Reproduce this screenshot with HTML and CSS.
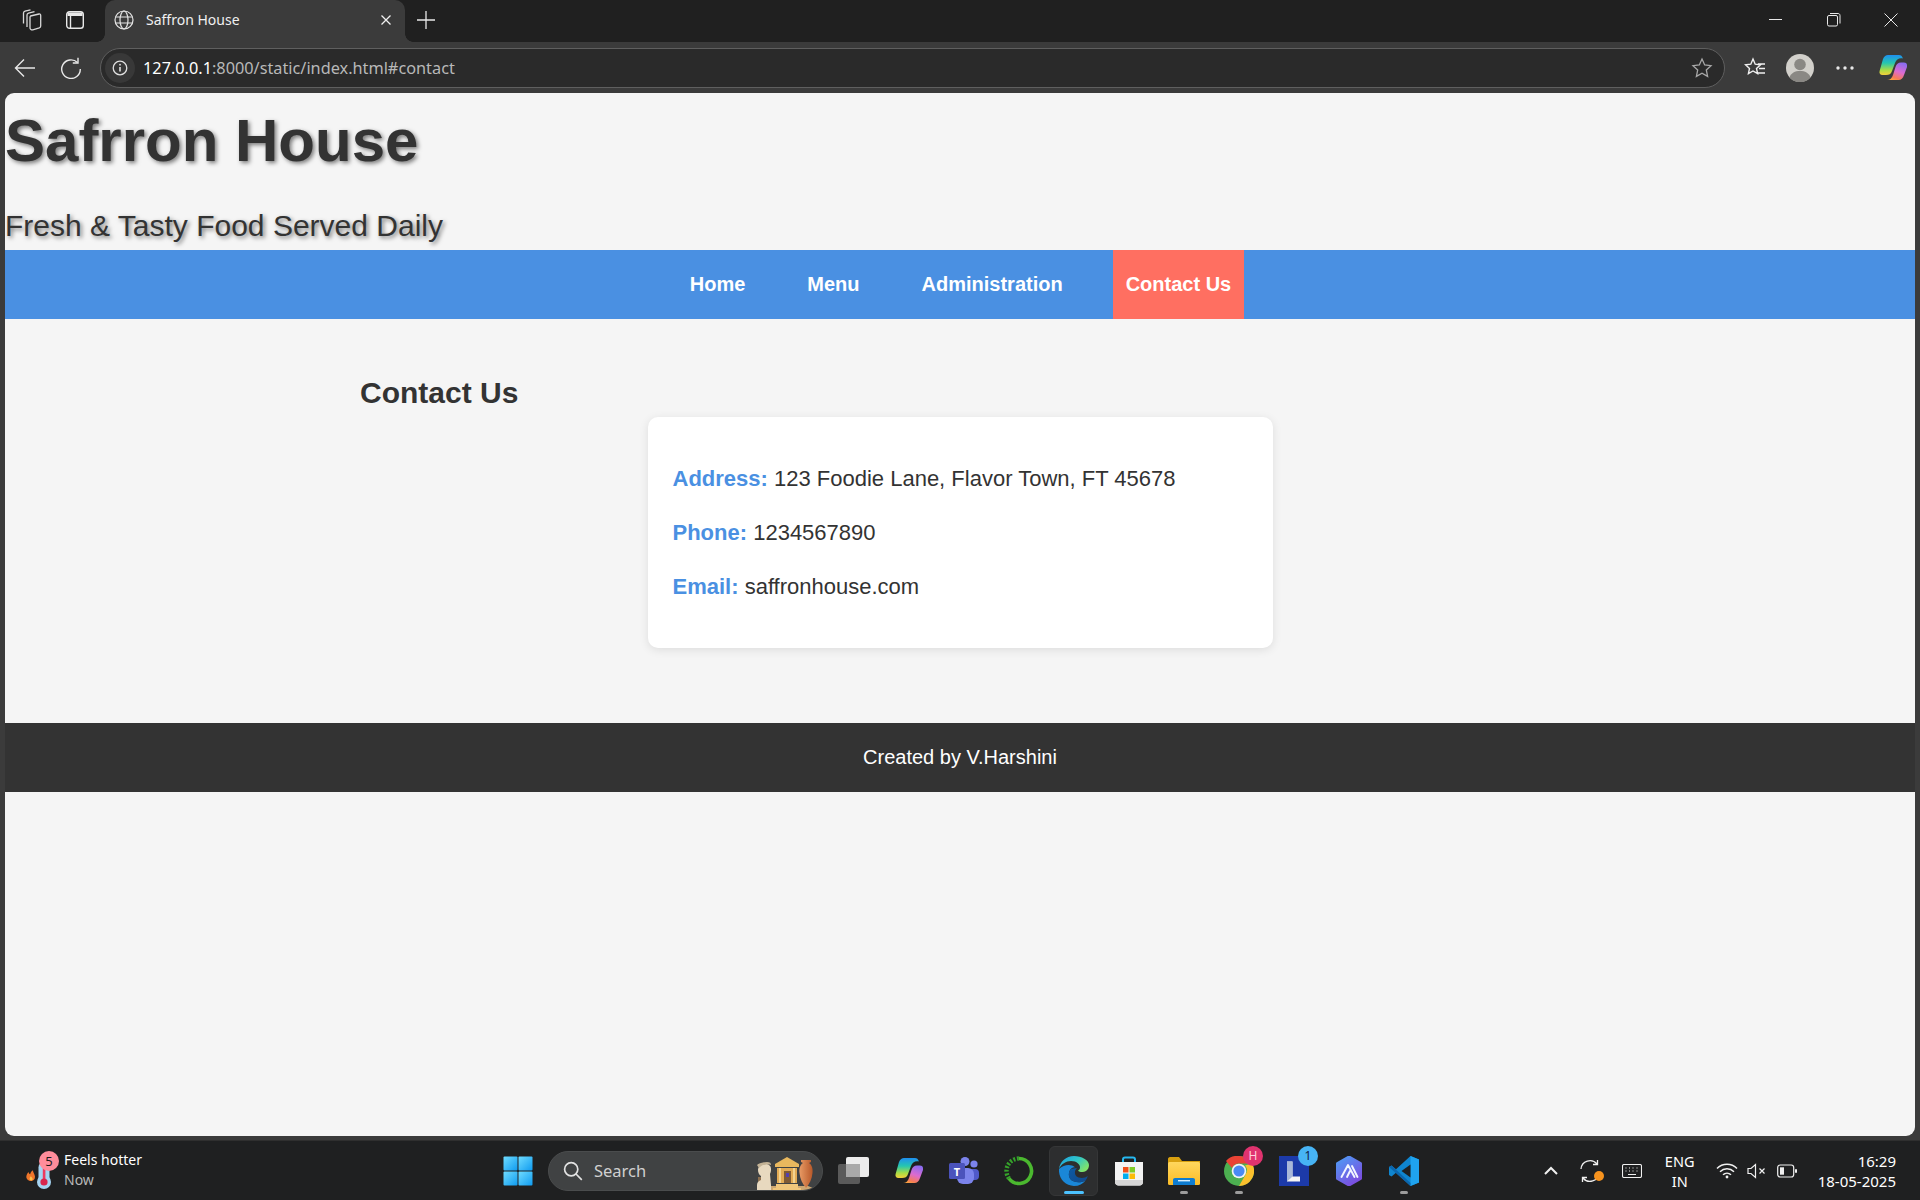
FILE: index.html
```html
<!DOCTYPE html>
<html lang="en">
<head>
<meta charset="utf-8">
<title>Saffron House</title>
<link rel="stylesheet" href="styles.css">
</head>
<body>
<svg class="defs" width="0" height="0" aria-hidden="true">
  <defs>
    <linearGradient id="copA" x1="0.3" y1="0" x2="0.3" y2="1"><stop offset="0" stop-color="#1f8ff0"/><stop offset=".4" stop-color="#25c6b0"/><stop offset=".75" stop-color="#a9dc45"/><stop offset="1" stop-color="#f4cf3a"/></linearGradient>
    <linearGradient id="copB" x1="0.7" y1="0" x2="0.3" y2="1"><stop offset="0" stop-color="#8a6cf0"/><stop offset=".5" stop-color="#dc6bd0"/><stop offset=".85" stop-color="#f57a5a"/><stop offset="1" stop-color="#f9a03f"/></linearGradient>
    <linearGradient id="edgeA" x1="0" y1="0" x2="1" y2="0.6"><stop offset="0" stop-color="#1b9de2"/><stop offset=".55" stop-color="#30c6c8"/><stop offset="1" stop-color="#7fe36c"/></linearGradient>
    <linearGradient id="edgeB" x1="0" y1="0" x2="1" y2="1"><stop offset="0" stop-color="#0c59a4"/><stop offset="1" stop-color="#114a8b"/></linearGradient>
    <linearGradient id="winG" x1="0" y1="0" x2="1" y2="1"><stop offset="0" stop-color="#6fdcff"/><stop offset="1" stop-color="#0f9bf0"/></linearGradient>
    <linearGradient id="folderG" x1="0" y1="0" x2="0" y2="1"><stop offset="0" stop-color="#ffd75e"/><stop offset="1" stop-color="#fcbc26"/></linearGradient>
    <linearGradient id="atomG" x1="0" y1="0" x2="0.6" y2="1"><stop offset="0" stop-color="#4d9df5"/><stop offset="1" stop-color="#7a4fe0"/></linearGradient>
    <linearGradient id="vaseG" x1="0" y1="0" x2="1" y2="0"><stop offset="0" stop-color="#e89a64"/><stop offset="1" stop-color="#b8592a"/></linearGradient>
  </defs>
</svg>

<div class="tabstrip">
  <span class="strip-icon strip-workspace">
    <svg width="24" height="24" viewBox="0 0 24 24" fill="none" stroke="#d8d8d8" stroke-width="1.300"><path d="M11.500 8 20 6c1-.2 1.700.4 1.700 1.400V18c0 1-.5 1.500-1.400 1.800l-6.500 2c-1.500.3-2.800-.7-2.800-1.800V9.200c0-.6.100-1 .5-1.200z"/><path d="M8 19V7c0-1 .5-1.500 1.500-1.800L15.500 3.600"/><path d="M4.500 15.500V5c0-1 .5-1.500 1.500-1.800L11.500 1.800"/></svg>
  </span>
  <span class="strip-icon strip-vertical">
    <svg width="20" height="20" viewBox="0 0 20 20" fill="none" stroke="#e8e8e8" stroke-width="1.400"><rect x="1.700" y="1.700" width="16.600" height="16.600" rx="2.800"/><path d="M2.500 2.500h15v3.500h-15z" fill="#e8e8e8" stroke="none"/><path d="M5.500 6v12"/></svg>
  </span>
  <div class="tab">
    <svg class="tab-globe" width="20" height="20" viewBox="0 0 20 20" fill="none" stroke="#e4e4e4" stroke-width="1.200"><circle cx="10" cy="10" r="9"/><ellipse cx="10" cy="10" rx="4" ry="9"/><path d="M1.500 7h17M1.500 13h17"/></svg>
    <span class="tab-title">Saffron House</span>
    <svg class="tab-close" width="12" height="12" viewBox="0 0 12 12" stroke="#f0f0f0" stroke-width="1.300"><path d="M1.500 1.500l9 9M10.500 1.500l-9 9"/></svg>
  </div>
  <svg class="tab-new" width="18" height="18" viewBox="0 0 18 18" stroke="#e8e8e8" stroke-width="1.300"><path d="M9 0v18M0 9h18"/></svg>
  <div class="win-controls">
    <svg width="14" height="14" viewBox="0 0 14 14" stroke="#e8e8e8" stroke-width="1"><path d="M0 6.500h13"/></svg>
    <svg width="14" height="14" viewBox="0 0 14 14" fill="none" stroke="#e8e8e8" stroke-width="1"><rect x=".5" y="2.500" width="10" height="10.500" rx="1.500"/><path d="M3 .5h8c1.200 0 2 .8 2 2v8"/></svg>
    <svg width="14" height="14" viewBox="0 0 14 14" stroke="#e8e8e8" stroke-width="1"><path d="M.5.500l13 13M13.500.5l-13 13"/></svg>
  </div>
</div>

<div class="toolbar">
  <svg class="tool-back" width="22" height="20" viewBox="0 0 22 20" fill="none" stroke="#e8e8e8" stroke-width="1.400"><path d="M21 10H1.500M10 1.500 1.500 10l8.500 8.500"/></svg>
  <svg class="tool-reload" width="22" height="22" viewBox="0 0 22 22" fill="none" stroke="#e8e8e8" stroke-width="1.400"><path d="M17.500 5.500A9.300 9.300 0 1 0 20.300 12"/><path d="M18 .8v5.200h-5.200"/></svg>
  <div class="address">
    <span class="info-wrap">
      <svg width="18" height="18" viewBox="0 0 18 18" fill="none" stroke="#e0e0e0" stroke-width="1.300"><circle cx="9" cy="9" r="6.800"/><path d="M9 8v4.500" stroke-width="1.600"/><circle cx="9" cy="5.700" r=".9" fill="#e0e0e0" stroke="none"/></svg>
    </span>
    <span class="url"><span class="url-host">127.0.0.1</span>:8000/static/index.html#contact</span>
    <svg class="addr-star" width="22" height="22" viewBox="0 0 22 22" fill="none" stroke="#a8a8a8" stroke-width="1.300"><path d="M11 2l2.700 6 6.300.7-4.700 4.300 1.300 6.400L11 16.200l-5.600 3.200 1.300-6.400L2 8.700 8.300 8z"/></svg>
  </div>
  <svg class="tool-fav" width="22" height="22" viewBox="0 0 22 22" fill="none" stroke="#f0f0f0" stroke-width="1.400"><path d="M9 2l2.200 5.200 5.300.5-4 3.700 1.100 5.300L9 14l-4.600 2.700 1.100-5.300-4-3.700 5.300-.5z"/><path d="M14 7h7M15 11.500h6M14 16h7"/></svg>
  <svg class="tool-avatar" width="28" height="28" viewBox="0 0 28 28"><circle cx="14" cy="14" r="14" fill="#d2d0cb"/><circle cx="14" cy="10.500" r="5.800" fill="#8a8884"/><path d="M3.500 23.500C5 18.800 9 17 14 17s9 1.800 10.500 6.500A14 14 0 0 1 3.500 23.500z" fill="#8a8884"/></svg>
  <svg class="tool-more" width="20" height="6" viewBox="0 0 20 6" fill="#e8e8e8"><circle cx="3" cy="3" r="1.700"/><circle cx="10" cy="3" r="1.700"/><circle cx="17" cy="3" r="1.700"/></svg>
  <svg class="tool-copilot" width="28" height="25" viewBox="0 0 28 25"><path d="M9 0h11c2 0 3 1 4 3.500-4-.8-6.700 1-8 4.500l-3 8c-1 3-3 4-6 4H3.500C1 20 0 18 .6 16L4 4C5 1.500 7 0 9 0z" fill="url(#copA)"/><path d="M19 25H8c3 0 5-2 6-5l2.500-8c1-3 2.500-4.500 5.500-4.500h3c2.500 0 3.500 2 3 4.500l-3 8c-1 3.500-3 5-5.500 5z" fill="url(#copB)"/></svg>
</div>

<div class="viewport">
  <div class="page">
    <header class="site-header">
      <h1 class="site-title">Safrron House</h1>
      <p class="site-tagline">Fresh &amp; Tasty Food Served Daily</p>
    </header>
    <nav class="site-nav">
      <a class="nav-link">Home</a>
      <a class="nav-link">Menu</a>
      <a class="nav-link">Administration</a>
      <a class="nav-link nav-active">Contact Us</a>
    </nav>
    <main class="content">
      <h2 class="section-title">Contact Us</h2>
      <div class="card">
        <p class="card-line"><strong class="label">Address:</strong> 123 Foodie Lane, Flavor Town, FT 45678</p>
        <p class="card-line"><strong class="label">Phone:</strong> 1234567890</p>
        <p class="card-line"><strong class="label">Email:</strong> saffronhouse.com</p>
      </div>
    </main>
    <footer class="site-footer">Created by V.Harshini</footer>
  </div>
</div>

<div class="taskbar">
  <div class="weather">
    <span class="weather-icon">
      <svg width="36" height="36" viewBox="0 0 36 36"><path d="M4 26c-2.500-2-2-5 .5-8 .3 1.500 1 2 1.600 2.300.5-2 1.500-3.300 2.900-4 -.3 2 2 4 2 6.500 0 2.500-1.500 4-3.500 4.200-1.500.2-2.600-.2-3.500-1z" fill="#f0762a"/><path d="M6 26c-.8-1-.4-2.500.8-3.800.7 1.200 2.200 1.800 1.800 3.300-.3 1-1.900 1.300-2.600.5z" fill="#fbc04a"/><rect x="14.500" y="8" width="11" height="22" rx="5.500" fill="#a6d4f2"/><circle cx="20" cy="28" r="7" fill="#a6d4f2"/><rect x="18.800" y="12" width="2.600" height="14" fill="#ee3a5f"/><circle cx="20" cy="28" r="3.600" fill="#d8264d"/></svg>
      <span class="weather-badge">5</span>
    </span>
    <span class="weather-text">
      <span class="weather-title">Feels hotter</span>
      <span class="weather-sub">Now</span>
    </span>
  </div>

  <div class="task-center">
    <span class="slot">
      <svg width="30" height="30" viewBox="0 0 30 30"><g fill="url(#winG)"><rect x="0.500" y="0.500" width="14" height="14" rx="1"/><rect x="15.500" y="0.500" width="14" height="14" rx="1"/><rect x="0.500" y="15.500" width="14" height="14" rx="1"/><rect x="15.500" y="15.500" width="14" height="14" rx="1"/></g></svg>
    </span>
    <div class="search">
      <svg width="20" height="20" viewBox="0 0 20 20" fill="none" stroke="#e2e2e2" stroke-width="1.700"><circle cx="8.200" cy="8.200" r="6.600"/><path d="M13 13l5.800 5.800"/></svg>
      <span class="search-text">Search</span>
      <svg class="search-art" width="58" height="34" viewBox="0 0 58 34"><path d="M2 33h50l5-2-5-2H8z" fill="#cda772"/><rect x="2" y="20" width="12" height="13" fill="#8f7150"/><path d="M1 33v-5c0-3 2-4 4-5v-4c-2-1-3-4-3-6 0-3 3-6 7-6s6 2 6 5c0 1 0 3-1 5l1 11v5z" fill="#e8d9bf"/><path d="M1 8c2-2 6-3 10-3 3 0 4 1 4 3-3-1-6 0-8 0-2 1-3 2-4 3z" fill="#c4b396"/><path d="M17 31h28v3H17zM20 27h22v4H20z" fill="#f0c67b"/><path d="M31 0 19 7v3h24V7z" fill="#e9b85e"/><path d="M21 11h20v15H21z" fill="#e2ab55"/><rect x="28" y="14" width="7" height="12" fill="#7f5a34"/><rect x="30" y="16" width="3" height="4" fill="#5540b0"/><path d="M23 11h2v15h-2zM37 11h2v15h-2z" fill="#f3d28f"/><path d="M45 3h10v2l-2 1c3 2 4 6 3.500 10-.5 6-3 11-6.500 15-3.500-4-6-9-6.500-15C43 12 44 8 47 6l-2-1z" fill="url(#vaseG)"/></svg>
    </div>
    <span class="slot">
      <svg width="32" height="28" viewBox="0 0 32 28"><rect x="0" y="7" width="22" height="20" rx="2" fill="#5a5a5a"/><rect x="8" y="0" width="23" height="20" rx="2" fill="#ececec"/><rect x="8" y="7" width="14" height="13" fill="#a9a9a9"/></svg>
    </span>
    <span class="slot">
      <svg width="28" height="25" viewBox="0 0 28 25"><path d="M9 0h11c2 0 3 1 4 3.500-4-.8-6.700 1-8 4.500l-3 8c-1 3-3 4-6 4H3.500C1 20 0 18 .6 16L4 4C5 1.500 7 0 9 0z" fill="url(#copA)"/><path d="M19 25H8c3 0 5-2 6-5l2.500-8c1-3 2.500-4.500 5.500-4.500h3c2.500 0 3.500 2 3 4.500l-3 8c-1 3.500-3 5-5.500 5z" fill="url(#copB)"/></svg>
    </span>
    <span class="slot">
      <svg width="30" height="28" viewBox="0 0 30 28"><circle cx="25" cy="7" r="3.600" fill="#7b83eb"/><rect x="19" y="12" width="11" height="11" rx="4" fill="#5059c9"/><circle cx="16" cy="4.500" r="4.500" fill="#7b83eb"/><rect x="8" y="11" width="17" height="16" rx="6" fill="#7b83eb"/><rect x="0" y="6" width="16" height="16" rx="1.500" fill="#4b53bc"/><text class="svg-t" x="8" y="18.500" text-anchor="middle">T</text></svg>
    </span>
    <span class="slot">
      <svg width="30" height="30" viewBox="0 0 30 30" fill="none"><path d="M15 2.500A12.500 12.500 0 1 1 5 22.500" stroke="#4bb82f" stroke-width="3.600"/><path d="M5 22.500A12.500 12.500 0 0 1 15 2.500" stroke="#35a32a" stroke-width="4.400" stroke-dasharray="2 1.600"/></svg>
    </span>
    <span class="slot slot-active">
      <svg width="30" height="30" viewBox="0 0 30 30"><path d="M15 0C7 0 1 5.500 0 13c2-5 7-8 12-8 6 0 9 3.500 9 6.500 0 1.500-.8 2.500-2 3.200 1.500 1.500 5.500 2 8 .3 2-1.300 3-3.500 3-6C30 4 22.500 0 15 0z" fill="url(#edgeA)"/><path d="M0 13c-.8 9 6 17 15 17 5 0 9-2 11.500-5.500-3.500 2-8 2.500-12 .8C10 23.500 9 19 10.500 15c1-2.600 3.500-4 5.500-3.700-4-3.500-11-3-16 1.700z" fill="#1a87d8"/><path d="M10.500 15c-1.500 4-.5 8.500 4 10.300 4 1.700 8.500 1.200 12-.8 1-1.300 1.800-2.800 2.300-4.500-2.300 2-6 2.500-9.300 1.500-3-1-4-3.500-3.500-6 .2-1.200 1-2.500 2-3.200-3-.3-6.500.2-7.500 2.700z" fill="url(#edgeB)"/></svg>
      <i class="dot dot-blue"></i>
    </span>
    <span class="slot">
      <svg width="30" height="30" viewBox="0 0 30 30"><path d="M9 6V3.500C9 2 10 1.500 11 1.500h8c1 0 2 .5 2 2V6" fill="none" stroke="#26b8f0" stroke-width="2"/><path d="M1 6h28v20c0 2-1.500 3.500-3.500 3.500h-21C2.500 29.500 1 28 1 26z" fill="#f4f4f4"/><path d="M1 24h28v2c0 2-1.500 3.500-3.500 3.500h-21C2.500 29.500 1 28 1 26z" fill="#d6d6d6"/><rect x="9" y="11" width="5.500" height="5.500" fill="#f1511b"/><rect x="15.500" y="11" width="5.500" height="5.500" fill="#80cc28"/><rect x="9" y="17.500" width="5.500" height="5.500" fill="#00adef"/><rect x="15.500" y="17.500" width="5.500" height="5.500" fill="#fbbc09"/></svg>
    </span>
    <span class="slot">
      <svg width="32" height="28" viewBox="0 0 32 28"><path d="M0 2c0-1 .8-2 2-2h9l3 4h18v6H0z" fill="#d8a00f"/><rect x="0" y="5" width="32" height="23" rx="1.500" fill="url(#folderG)"/><path d="M5 28v-5c0-1.200.8-2 2-2h18c1.200 0 2 .8 2 2v5z" fill="#0e7cd0"/><rect x="10" y="23" width="12" height="1.400" fill="#d8f0ff"/></svg>
      <i class="dot"></i>
    </span>
    <span class="slot">
      <svg width="30" height="30" viewBox="0 0 30 30"><circle cx="15" cy="15" r="15" fill="#4caf50"/><path d="M15 0a15 15 0 0 1 13 7.500H15a7.500 7.500 0 0 0-7 4.500L2 5A15 15 0 0 1 15 0z" fill="#ea4335"/><path d="M28 7.500A15 15 0 0 1 15 30l6.500-11.300A7.500 7.500 0 0 0 21 9.500z" fill="#fbc02d"/><circle cx="15" cy="15" r="7.300" fill="#f4f4f4"/><circle cx="15" cy="15" r="5.600" fill="#4a8af4"/></svg>
      <span class="badge badge-pink">H</span>
      <i class="dot"></i>
    </span>
    <span class="slot">
      <svg width="30" height="30" viewBox="0 0 30 30"><rect width="30" height="30" fill="#1c3aa9"/><path d="M8 5.500h5.500v15H21v5H8z" fill="#f5f5f5"/><path d="M8 25.500l5.500-5V5.500H8z" fill="#a9b8d8"/></svg>
      <span class="badge badge-blue">1</span>
    </span>
    <span class="slot">
      <svg width="28" height="30" viewBox="0 0 28 30"><path d="M14 1 25.500 7.500v15L14 29 2.500 22.500v-15z" fill="url(#atomG)" stroke="url(#atomG)" stroke-width="3" stroke-linejoin="round"/><path d="M6.500 21 13 9l6.500 12M12 21l3-6M17 10l5.500 11" fill="none" stroke="#f2f6ff" stroke-width="1.900" stroke-linecap="round" stroke-linejoin="round"/></svg>
    </span>
    <span class="slot">
      <svg width="30" height="30" viewBox="0 0 30 30"><path d="M21.500 0 30 3.500v23L21.500 30 7 16.800 2.500 20.500 0 19v-8l2.500-1.500L7 13.200z" fill="#0f85cf"/><path d="M21.500 0 30 3.500v23L21.500 30z" fill="#1fa3ef"/><path d="M21.500 8.500v13L12.500 15z" fill="#1f2021"/><path d="M0 11l2.500-1.500L21.500 27v3L0 11z" fill="#0b66ae"/></svg>
      <i class="dot"></i>
    </span>
  </div>

  <div class="tray">
    <svg class="tray-chevron" width="16" height="10" viewBox="0 0 16 10" fill="none" stroke="#f0f0f0" stroke-width="2"><path d="M2 8l6-6 6 6"/></svg>
    <span class="tray-sync">
      <svg width="22" height="24" viewBox="0 0 22 24" fill="none" stroke="#f0f0f0" stroke-width="1.300"><path d="M2 10a9 9 0 0 1 16-5"/><path d="M18.500 1v4.500H14"/><path d="M20 14a9 9 0 0 1-16 5"/><path d="M3.500 23v-4.500H8"/></svg>
      <i class="sync-dot"></i>
    </span>
    <svg class="tray-kbd" width="20" height="14" viewBox="0 0 20 14" fill="none" stroke="#f0f0f0" stroke-width="1.100"><rect x=".5" y=".5" width="19" height="13" rx="1.500"/><path d="M3.500 4h1M7 4h1M10.500 4h1M14.500 4h1M3.500 7h1M7 7h1M10.500 7h1M14.500 7h1M6 10.500h8"/></svg>
    <span class="tray-lang"><span>ENG</span><span>IN</span></span>
    <svg class="tray-wifi" width="22" height="16" viewBox="0 0 22 16" fill="none" stroke="#f0f0f0" stroke-width="1.500"><path d="M1 5.500a14 14 0 0 1 20 0M4 8.700a10 10 0 0 1 14 0M7 11.700a6 6 0 0 1 8 0"/><circle cx="11" cy="14" r="1.400" fill="#f0f0f0" stroke="none"/></svg>
    <svg class="tray-vol" width="20" height="16" viewBox="0 0 20 16" fill="none" stroke="#f0f0f0" stroke-width="1.200"><path d="M1 5.500h3L8.500 1.500v13L4 10.500H1z"/><path d="M12.500 5.500l5 5M17.500 5.500l-5 5"/></svg>
    <svg class="tray-batt" width="20" height="14" viewBox="0 0 20 14" fill="none" stroke="#f0f0f0" stroke-width="1.200"><rect x=".7" y="1" width="16" height="12" rx="2.500"/><rect x="3" y="3.300" width="4" height="7.400" fill="#f0f0f0" stroke="none"/><rect x="18" y="5" width="2" height="4" rx="1" fill="#f0f0f0" stroke="none"/></svg>
    <span class="tray-clock"><span>16:29</span><span>18-05-2025</span></span>
  </div>
</div>
</body>
</html>
```

FILE: styles.css
```css
* { box-sizing: border-box; }

html, body { margin: 0; padding: 0; }

body {
  width: 1920px;
  height: 1200px;
  display: flex;
  flex-direction: column;
  overflow: hidden;
  background: #3b3b3b;
  font-family: "Liberation Sans", Arial, sans-serif;
}

.defs { position: absolute; }

/* Browser chrome */
.tabstrip {
  height: 42px;
  flex: none;
  display: flex;
  align-items: center;
  background: #202020;
  color: #f0f0f0;
  font-family: "Noto Sans", sans-serif;
}

.strip-icon {
  display: flex;
  justify-content: center;
  flex: none;
  margin-bottom: 3px;
}

.strip-workspace { width: 46px; margin-left: 8px; }
.strip-vertical { width: 42px; }

.tab {
  position: relative;
  width: 300px;
  height: 42px;
  margin-left: 9px;
  padding: 0 13px 3px 9px;
  display: flex;
  align-items: center;
  background: #3b3b3b;
  border-radius: 10px 10px 0 0;
}

.tab::before,
.tab::after {
  content: "";
  position: absolute;
  bottom: 0;
  width: 8px;
  height: 8px;
}

.tab::before {
  left: -8px;
  background: radial-gradient(circle at 0 0, #202020 7.5px, #3b3b3b 8px);
}

.tab::after {
  right: -8px;
  background: radial-gradient(circle at 100% 0, #202020 7.5px, #3b3b3b 8px);
}

.tab-title {
  margin-left: 12px;
  font-size: 14px;
  flex: 1;
}

.tab-new { margin: 0 0 3px 12px; }

.win-controls {
  margin: 0 0 3px auto;
  padding-right: 22px;
  display: flex;
  gap: 43.5px;
}

.toolbar {
  height: 51px;
  flex: none;
  display: flex;
  align-items: center;
  background: #3b3b3b;
}

.tool-back { margin-left: 14px; flex: none; }
.tool-reload { margin-left: 24px; flex: none; }

.address {
  width: 1625px;
  height: 40px;
  margin-left: 18px;
  padding-right: 11px;
  flex: none;
  display: flex;
  align-items: center;
  background: #2a2a2a;
  border: 1px solid #5f5f5f;
  border-radius: 20px;
}

.info-wrap {
  width: 30px;
  height: 30px;
  margin-left: 4px;
  display: flex;
  align-items: center;
  justify-content: center;
  background: #383838;
  border-radius: 50%;
}

.url {
  margin-left: 8px;
  font-family: "Noto Sans", sans-serif;
  font-size: 16.3px;
  color: #b8b8b8;
  flex: 1;
}

.url-host { color: #ffffff; }

.tool-fav { margin-left: 19px; }
.tool-avatar { margin-left: 20px; }
.tool-more { margin-left: 21px; }
.tool-copilot { margin-left: 24px; }

.viewport {
  flex: 1;
  min-height: 0;
  padding: 0 5px 4px;
  display: flex;
}

/* Page */
.page {
  flex: 1;
  background: #f5f5f5;
  border-radius: 9px;
  overflow: hidden;
  color: #333333;
}

.site-header { padding: 13px 0 7px; }

.site-title {
  margin: 0;
  font-size: 60px;
  font-weight: bold;
  line-height: 69px;
  text-shadow: 2px 2px 4px rgba(0, 0, 0, 0.5);
}

.site-tagline {
  margin: 34px 0 0;
  font-size: 30px;
  line-height: 34px;
  text-shadow: 2px 2px 4px rgba(0, 0, 0, 0.5);
}

.site-nav {
  height: 69px;
  padding-left: 2px;
  display: flex;
  justify-content: center;
  gap: 38px;
  background: #4a90e2;
}

.nav-link {
  padding: 0 12px;
  display: flex;
  align-items: center;
  font-size: 20px;
  font-weight: bold;
  color: #ffffff;
}

.nav-active {
  padding: 0 13px;
  background: #ff6f61;
}

.content {
  width: 1200px;
  margin: 0 auto;
  padding: 57px 0 75px;
}

.section-title {
  margin: 0 0 7px;
  font-size: 30px;
  font-weight: bold;
  line-height: 34px;
}

.card {
  width: 625px;
  margin: 0 auto;
  padding: 49px 25px;
  display: flex;
  flex-direction: column;
  gap: 29px;
  background: #ffffff;
  border-radius: 10px;
  box-shadow: 0 2px 10px rgba(0, 0, 0, 0.1);
}

.card-line {
  margin: 0;
  font-size: 22px;
  line-height: 25px;
}

.label { color: #4a90e2; }

.site-footer {
  height: 69px;
  display: flex;
  align-items: center;
  justify-content: center;
  background: #333333;
  color: #ffffff;
  font-size: 20px;
}

/* Taskbar */
.taskbar {
  height: 60px;
  flex: none;
  display: flex;
  align-items: center;
  background: #1f2021;
  border-top: 1px solid #2f2f2f;
  color: #ffffff;
  font-family: "Noto Sans", sans-serif;
}

.weather {
  width: 490px;
  flex: none;
  padding-left: 24px;
  display: flex;
  align-items: center;
}

.weather-icon {
  position: relative;
  width: 40px;
  height: 38px;
  display: flex;
  align-items: flex-end;
}

.weather-badge {
  position: absolute;
  left: 15px;
  top: -1px;
  width: 20px;
  height: 20px;
  border-radius: 50%;
  background: #ff8d9b;
  color: #1a1a1a;
  font-size: 13px;
  line-height: 20px;
  text-align: center;
}

.weather-text {
  display: flex;
  flex-direction: column;
  margin-top: -2px;
  font-size: 14px;
  line-height: 20px;
}

.weather-sub { color: #b8b8b8; }

.task-center {
  display: flex;
  align-items: center;
}

.slot {
  position: relative;
  width: 55px;
  height: 50px;
  flex: none;
  display: flex;
  align-items: center;
  justify-content: center;
}

.slot-active::before {
  content: "";
  position: absolute;
  left: 3px;
  right: 3px;
  top: 0;
  bottom: 0;
  background: #2d2e2f;
  border: 1px solid #353637;
  border-radius: 6px;
}

.slot-active svg { position: relative; }

.dot {
  position: absolute;
  left: 50%;
  bottom: 2px;
  width: 8px;
  height: 3px;
  margin-left: -4px;
  background: #9c9c9c;
  border-radius: 2px;
}

.dot-blue {
  width: 20px;
  margin-left: -10px;
  background: #4cc2ff;
}

.search {
  width: 275px;
  height: 40px;
  margin: 0 3px;
  padding: 0 8px 0 14px;
  flex: none;
  display: flex;
  align-items: center;
  background: #404243;
  border: 1px solid #4a4c4d;
  border-radius: 20px;
  overflow: hidden;
}

.search-text {
  margin-left: 11px;
  flex: 1;
  font-size: 16.5px;
  color: #d0d0d0;
}

.search-art { margin-top: 6px; }

.svg-t {
  font-family: "Noto Sans", sans-serif;
  font-size: 11px;
  font-weight: 700;
  fill: #ffffff;
}

.badge {
  position: absolute;
  width: 20px;
  height: 20px;
  left: 32px;
  top: 0;
  border-radius: 50%;
  color: #ffffff;
  font-size: 12px;
  line-height: 20px;
  text-align: center;
}

.badge-pink { background: #e0336f; color: #ffd0dc; }
.badge-blue { background: #47b4f5; color: #10204a; }

.tray {
  margin-left: auto;
  display: flex;
  align-items: center;
  font-size: 14.5px;
  line-height: 20px;
}

.tray-chevron { margin-right: 20px; }

.tray-sync {
  position: relative;
  display: flex;
  margin-right: 21px;
}

.sync-dot {
  position: absolute;
  right: -3px;
  bottom: 2px;
  width: 10px;
  height: 10px;
  border-radius: 50%;
  background: #f7931e;
}

.tray-kbd { margin-right: 13px; }

.tray-lang {
  width: 50px;
  display: flex;
  flex-direction: column;
  align-items: center;
  margin-right: 11px;
}

.tray-wifi { margin-right: 9px; }
.tray-vol { margin-right: 10px; }
.tray-batt { margin-right: 21px; }

.tray-clock {
  display: flex;
  flex-direction: column;
  align-items: flex-end;
  padding-right: 24px;
  font-size: 15px;
}
```
